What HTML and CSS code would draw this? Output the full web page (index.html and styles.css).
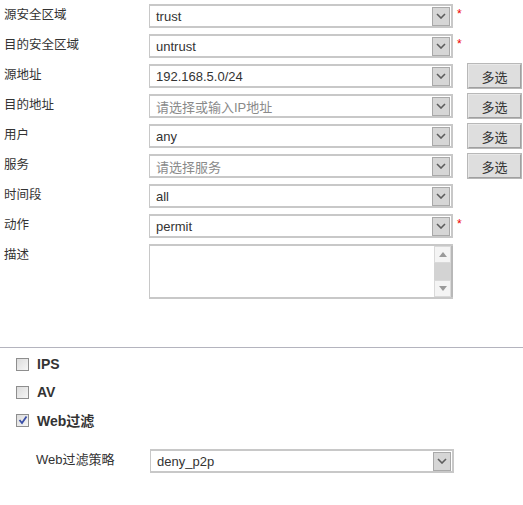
FILE: index.html
```html
<!DOCTYPE html>
<html lang="zh">
<head>
<meta charset="utf-8">
<title>策略</title>
<link rel="stylesheet" href="styles.css">
</head>
<body>
<form class="policy">
  <div class="rows">
    <div class="row">
      <label class="lbl">源安全区域</label>
      <div class="sel"><span class="val">trust</span><span class="drop"><svg viewBox="0 0 10 6" width="10" height="6"><polyline points="1,1 5,5 9,1"/></svg></span></div>
      <span class="req">*</span>
    </div>
    <div class="row">
      <label class="lbl">目的安全区域</label>
      <div class="sel"><span class="val">untrust</span><span class="drop"><svg viewBox="0 0 10 6" width="10" height="6"><polyline points="1,1 5,5 9,1"/></svg></span></div>
      <span class="req">*</span>
    </div>
    <div class="row">
      <label class="lbl">源地址</label>
      <div class="sel"><span class="val">192.168.5.0/24</span><span class="drop"><svg viewBox="0 0 10 6" width="10" height="6"><polyline points="1,1 5,5 9,1"/></svg></span></div>
      <button type="button" class="multi">多选</button>
    </div>
    <div class="row">
      <label class="lbl">目的地址</label>
      <div class="sel"><span class="val ph">请选择或输入IP地址</span><span class="drop"><svg viewBox="0 0 10 6" width="10" height="6"><polyline points="1,1 5,5 9,1"/></svg></span></div>
      <button type="button" class="multi">多选</button>
    </div>
    <div class="row">
      <label class="lbl">用户</label>
      <div class="sel"><span class="val">any</span><span class="drop"><svg viewBox="0 0 10 6" width="10" height="6"><polyline points="1,1 5,5 9,1"/></svg></span></div>
      <button type="button" class="multi">多选</button>
    </div>
    <div class="row">
      <label class="lbl">服务</label>
      <div class="sel"><span class="val ph">请选择服务</span><span class="drop"><svg viewBox="0 0 10 6" width="10" height="6"><polyline points="1,1 5,5 9,1"/></svg></span></div>
      <button type="button" class="multi">多选</button>
    </div>
    <div class="row">
      <label class="lbl">时间段</label>
      <div class="sel"><span class="val">all</span><span class="drop"><svg viewBox="0 0 10 6" width="10" height="6"><polyline points="1,1 5,5 9,1"/></svg></span></div>
    </div>
    <div class="row">
      <label class="lbl">动作</label>
      <div class="sel"><span class="val">permit</span><span class="drop"><svg viewBox="0 0 10 6" width="10" height="6"><polyline points="1,1 5,5 9,1"/></svg></span></div>
      <span class="req">*</span>
    </div>
    <div class="row row-desc">
      <label class="lbl">描述</label>
      <div class="desc">
        <textarea class="desc-text"></textarea>
        <div class="sbar">
          <span class="sbtn"><svg viewBox="0 0 8 5" width="8" height="5"><polygon points="0,5 4,0 8,5"/></svg></span>
          <span class="strack"></span>
          <span class="sbtn"><svg viewBox="0 0 8 5" width="8" height="5"><polygon points="0,0 8,0 4,5"/></svg></span>
        </div>
      </div>
    </div>
  </div>

  <hr class="sep">

  <div class="checks">
    <label class="chk"><span class="box"></span><span class="chk-text">IPS</span></label>
    <label class="chk"><span class="box"></span><span class="chk-text">AV</span></label>
    <label class="chk"><span class="box on"><svg viewBox="0 0 10 10" width="10" height="10"><polyline points="1.5,5 4,8 8.5,1.5"/></svg></span><span class="chk-text">Web过滤</span></label>
  </div>

  <div class="row sub">
    <label class="lbl sub-lbl">Web过滤策略</label>
    <div class="sel"><span class="val">deny_p2p</span><span class="drop"><svg viewBox="0 0 10 6" width="10" height="6"><polyline points="1,1 5,5 9,1"/></svg></span></div>
  </div>
</form>
</body>
</html>
```

FILE: styles.css
```css
* { box-sizing: border-box; }

body {
  margin: 0;
  background: #fff;
  font-family: "Liberation Sans", Arial, "Noto Sans CJK SC", sans-serif;
  font-size: 13px;
  color: #333;
}

.policy {
  padding-top: 4px;
}

.rows {
  display: flex;
  flex-direction: column;
  gap: 6px;
}

.row {
  display: grid;
  grid-template-columns: 149px 304px auto;
  align-items: start;
  height: 24px;
}

.lbl {
  padding-left: 4px;
  line-height: 20px;
  color: #333;
  font-family: "Noto Sans CJK SC", sans-serif;
  font-size: 12.5px;
}

.sel {
  height: 24px;
  border: 2px solid #c8c8c8;
  border-left-width: 1px;
  display: flex;
  align-items: center;
  justify-content: space-between;
  padding: 0 1px 0 6px;
  background: #fff;
}

.val {
  font-size: 13px;
  color: #333;
  font-family: "Liberation Sans", Arial, "Noto Sans CJK SC", sans-serif;
}

.val.ph {
  color: #8a8a8a;
}

.drop {
  width: 18px;
  height: 19px;
  background: #d6d6d6;
  border: 1px solid #a9a9a9;
  display: flex;
  align-items: center;
  justify-content: center;
}

.drop svg polyline {
  fill: none;
  stroke: #5e5e5e;
  stroke-width: 1.6;
}

.req {
  color: #e00;
  font-size: 12px;
  line-height: 1;
  padding: 4px 0 0 4px;
}

.multi {
  margin: -1px 0 0 14px;
  width: 55px;
  height: 26px;
  background: #dedede;
  border: 2px solid;
  border-color: #e8e8e8 #a0a0a0 #a0a0a0 #e8e8e8;
  outline: 1px solid #b8b8b8;
  outline-offset: -1px;
  font-family: "Noto Sans CJK SC", sans-serif;
  font-size: 13px;
  color: #333;
  padding: 0;
}

.row-desc {
  height: 55px;
}

.desc {
  width: 304px;
  height: 55px;
  border: 2px solid #c8c8c8;
  border-left-width: 1px;
  border-right: none;
  display: flex;
  background: #fff;
}

.desc-text {
  flex: 1;
  border: none;
  resize: none;
  outline: none;
  margin: 0;
  padding: 2px 4px;
  font-family: inherit;
}

.sbar {
  width: 19px;
  display: flex;
  flex-direction: column;
  background: #d3d3d3;
  border-right: 2px solid #b8b8b8;
}

.sbtn {
  height: 17px;
  background: #f4f4f4;
  border: 1px solid #d9d9d9;
  display: flex;
  align-items: center;
  justify-content: center;
}

.sbtn svg polygon {
  fill: #9a9a9a;
}

.strack {
  flex: 1;
  background: #d3d3d3;
}

.sep {
  margin: 48px 0 0;
  border: none;
  border-top: 1px solid #b4b4be;
}

.checks {
  display: flex;
  flex-direction: column;
  gap: 8px;
  padding: 6px 0 0 16px;
}

.chk {
  display: flex;
  align-items: center;
  gap: 8px;
  height: 20px;
}

.box {
  width: 13px;
  height: 13px;
  border: 1px solid #8e8e8e;
  background: linear-gradient(135deg, #dcdcdc, #f6f6f6);
  display: flex;
  align-items: center;
  justify-content: center;
}

.box svg polyline {
  fill: none;
  stroke: #3a4fa8;
  stroke-width: 1.8;
}

.chk-text {
  font-weight: bold;
  font-size: 14px;
  color: #333;
  font-family: "Liberation Sans", Arial, "Noto Sans CJK SC", sans-serif;
}

.sub {
  margin-top: 19px;
  grid-template-columns: 150px 304px;
}

.sub-lbl {
  padding-left: 36px;
  padding-top: 1px;
  font-family: "Liberation Sans", Arial, "Noto Sans CJK SC", sans-serif;
  font-size: 13px;
}
```
